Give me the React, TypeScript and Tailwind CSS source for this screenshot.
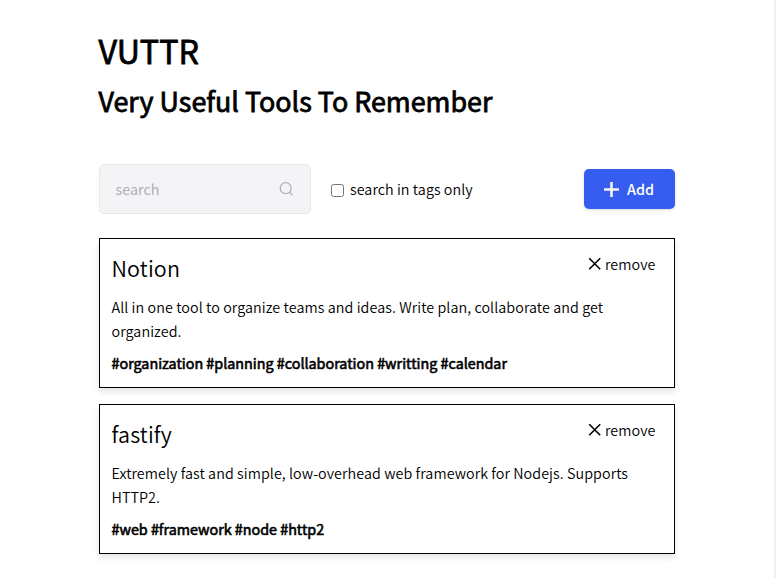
const tools = [
  {
    name: "Notion",
    description: "All in one tool to organize teams and ideas. Write plan, collaborate and get organized.",
    tags: ["organization", "planning", "collaboration", "writting", "calendar"],
  },
  {
    name: "fastify",
    description: "Extremely fast and simple, low-overhead web framework for Nodejs. Supports HTTP2.",
    tags: ["web", "framework", "node", "http2"],
  },
];

function ToolCard({ name, description, tags }: (typeof tools)[number]) {
  return (
    <article className="h-[150px] border border-black bg-white pt-[11px] pr-3 pl-[11.5px] shadow-[0_4px_6px_rgba(0,0,0,0.1)]">
      <div className="flex justify-between pr-[6.5px]">
        <h3 className="text-[21.5px] leading-9 font-[350] tracking-[0.15px]">{name}</h3>
        <button className="mt-[2px] flex h-6 items-center gap-[3px] leading-6 font-[350] tracking-[0.1px]">
          <svg className="size-[14px]" viewBox="0 0 14 14" fill="none" stroke="currentColor" strokeWidth="1.6">
            <path d="m1.2 1.2 11 11M12.2 1.2l-11 11" />
          </svg>
          remove
        </button>
      </div>
      <p className="mt-[9px] leading-6 font-[350] tracking-[0.07px]">{description}</p>
      <p className="mt-2 leading-6 [-webkit-text-stroke:0.6px_black]">{tags.map((t) => "#" + t).join(" ")}</p>
    </article>
  );
}

export default function App() {
  return (
    <main className="h-[578px] overflow-hidden border-r-2 border-[#f1f1f1] bg-white font-['Noto_Sans_CJK_SC',sans-serif] text-[14.33px] text-black">
      <div className="ml-[99px] w-[576px] pt-[23px]">
        <h1 className="-ml-[0.5px] text-[32.2px] leading-[54px] [-webkit-text-stroke:0.8px_black]">VUTTR</h1>
        <h2 className="mt-[1px] -ml-[0.5px] text-[26.87px] leading-[45px] [-webkit-text-stroke:0.8px_black]">Very Useful Tools To Remember</h2>
        <div className="mt-[41px] flex h-[50px] items-center">
          <div className="flex h-[50px] w-[212px] items-center justify-between rounded-[5px] border border-[#e7e7ea] bg-[#f4f4f6] pr-4 pl-[15.5px] text-[#b1adb9]">
            <span>search</span>
            <svg className="size-4" viewBox="0 0 16 16" fill="none" stroke="currentColor" strokeWidth="1.2">
              <circle cx="7.7" cy="7.2" r="5.5" />
              <path d="m11.5 11.2 3 3" />
            </svg>
          </div>
          <label className="ml-5 flex items-center gap-[6px] font-[350] tracking-[0.05px]">
            <input type="checkbox" className="mt-[3px] size-[13px]" />
            search in tags only
          </label>
          <button className="ml-auto flex h-10 w-[91px] items-center justify-center gap-2 rounded-[5px] bg-[#365df0] pr-px font-medium text-white shadow-[0_1px_3px_rgba(0,0,0,0.15)]">
            <svg className="mt-px size-[15px]" viewBox="0 0 15 15" stroke="#f4f4f6" strokeWidth="2.6">
              <path d="M7.5 0v15M0 7.5h15" />
            </svg>
            Add
          </button>
        </div>
        <div className="mt-6 flex flex-col gap-4">
          {tools.map((tool) => (
            <ToolCard key={tool.name} {...tool} />
          ))}
        </div>
      </div>
    </main>
  );
}
